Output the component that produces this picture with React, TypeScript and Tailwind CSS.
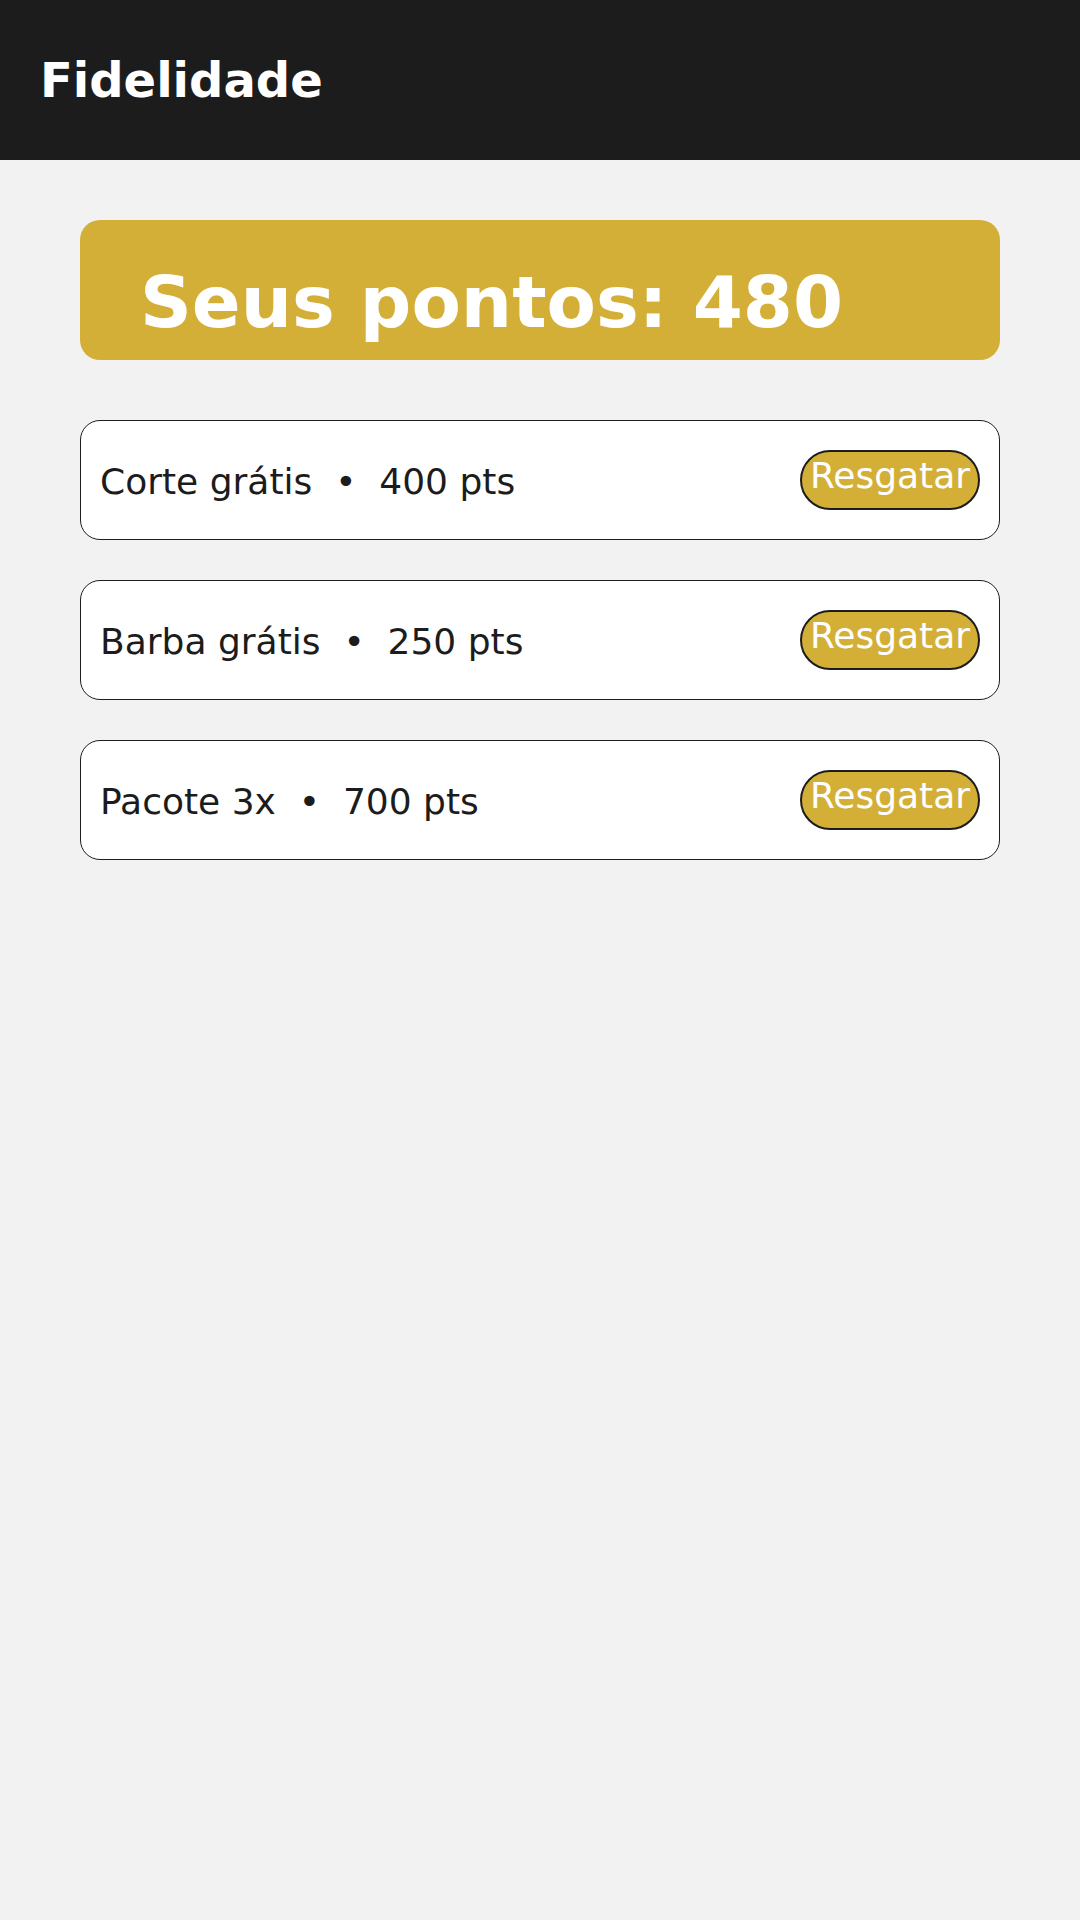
import React from 'react';

interface Reward {
  name: string;
  points: number;
}

const rewards: Reward[] = [
  { name: 'Corte grátis', points: 400 },
  { name: 'Barba grátis', points: 250 },
  { name: 'Pacote 3x', points: 700 },
];

const RewardRow: React.FC<{ reward: Reward }> = ({ reward }) => {
  return (
    <div className="flex h-[120px] items-center justify-between rounded-[20px] border border-[#1c1c1c] bg-white px-[19px]">
      <span className="mt-[3px] whitespace-pre text-[36px] leading-[42px] text-[#1c1c1c]">
        {`${reward.name}  •  ${reward.points} pts`}
      </span>
      <button
        type="button"
        className="flex h-[60px] w-[180px] items-start justify-center rounded-full border-2 border-[#1c1c1c] bg-[#d4af37] pt-[3px] text-[36px] leading-[42px] text-white"
      >
        Resgatar
      </button>
    </div>
  );
};

export default function App() {
  return (
    <div className="min-h-[1920px] w-full bg-[#f2f2f2] font-['DejaVu_Sans',sans-serif]">
      <header className="flex h-[160px] items-center bg-[#1c1c1c] px-[40px]">
        <h1 className="text-[48px] font-bold leading-[56px] text-white">Fidelidade</h1>
      </header>

      <main className="flex flex-col px-[80px] pt-[60px]">
        <div className="rounded-[20px] bg-[#d4af37] px-[60px] pb-[16px] pt-[40px]">
          <p className="text-[72px] font-bold leading-[84px] text-white">Seus pontos: 480</p>
        </div>

        <div className="mt-[60px] flex flex-col gap-[40px]">
          {rewards.map((reward) => (
            <RewardRow key={reward.name} reward={reward} />
          ))}
        </div>
      </main>
    </div>
  );
}
